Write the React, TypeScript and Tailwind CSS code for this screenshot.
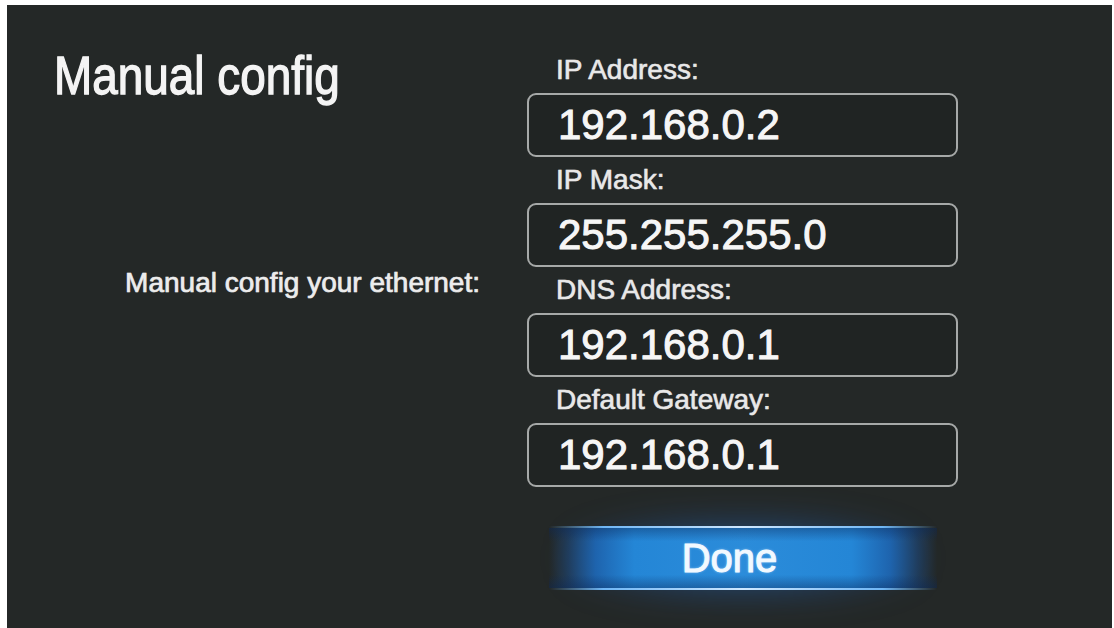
import React from "react";

const fields = [
  { label: "IP Address:", value: "192.168.0.2" },
  { label: "IP Mask:", value: "255.255.255.0" },
  { label: "DNS Address:", value: "192.168.0.1" },
  { label: "Default Gateway:", value: "192.168.0.1" },
];

export default function App() {
  return (
    <div
      className="w-[1114px] h-[628px] bg-white flex overflow-hidden"
      style={{ fontFamily: '"Liberation Sans", Arial, sans-serif' }}
    >
      <div className="mt-[5px] ml-[7px] mr-[2px] h-[623px] flex-1 bg-[#242827] flex text-white antialiased [text-shadow:0_0_1px_rgba(255,255,255,0.5)]">
        {/* Left column */}
        <div className="w-[520px] flex flex-col pt-[43px]">
          <div className="pl-[47px] h-[54px] leading-none">
            <span className="inline-block text-[54px] leading-none text-[#f4f4f4] scale-x-[0.85] origin-left whitespace-nowrap [-webkit-text-stroke:1.3px_#f4f4f4]">
              Manual config
            </span>
          </div>
          <div className="mt-[167px] pr-[47px] text-right text-[28px] leading-none text-[#ececec] whitespace-nowrap [-webkit-text-stroke:0.6px_#ececec]">
            Manual config your ethernet:
          </div>
        </div>

        {/* Right column */}
        <div className="w-[431px] flex flex-col pt-[42px]">
          {fields.map((f) => (
            <div key={f.label} className="flex flex-col">
              <div className="h-[46px] pt-[9px] pl-[29px] text-[28px] leading-none text-[#e8e8e8] whitespace-nowrap [-webkit-text-stroke:0.5px_#e8e8e8]">
                {f.label}
              </div>
              <div className="h-[64px] border-2 border-[#a6a9a8] rounded-[9px] flex items-center pl-[29px] bg-[#202423]">
                <span className="text-[42px] leading-none text-[#f6f6f6] whitespace-nowrap [-webkit-text-stroke:0.9px_#f6f6f6]">
                  {f.value}
                </span>
              </div>
            </div>
          ))}

          {/* Done button */}
          <div className="relative mt-[39px] mx-auto w-[388px] h-[64px]">
            <div className="absolute left-[20px] right-[20px] top-[-8px] bottom-[-8px] rounded-full blur-lg bg-[radial-gradient(ellipse_at_center,rgba(40,130,230,0.5)_0%,rgba(30,100,200,0.3)_55%,transparent_80%)]" />
            <div className="absolute inset-x-0 top-[2px] bottom-[2px] bg-[linear-gradient(90deg,transparent_0%,rgba(25,95,180,0.35)_5%,rgba(29,112,200,0.8)_12%,#2486d6_22%,#2b8cda_50%,#2486d6_78%,rgba(29,112,200,0.8)_88%,rgba(25,95,180,0.35)_95%,transparent_100%)]" />
            <div className="absolute inset-x-0 top-[2px] bottom-[2px] bg-[linear-gradient(180deg,rgba(10,40,90,0.4)_0%,rgba(10,40,90,0)_22%,rgba(10,40,90,0)_78%,rgba(10,40,90,0.4)_100%)]" />
            <div className="absolute inset-x-0 top-0 h-[2px] bg-[linear-gradient(90deg,transparent_0%,#6fb6f5_14%,#cfe8ff_50%,#6fb6f5_86%,transparent_100%)]" />
            <div className="absolute inset-x-0 bottom-0 h-[2px] bg-[linear-gradient(90deg,transparent_0%,#6fb6f5_14%,#cfe8ff_50%,#6fb6f5_86%,transparent_100%)]" />
            <div className="relative h-full flex items-center justify-center pr-[26px]">
              <span className="text-[40px] leading-none text-[#f2f9ff] [-webkit-text-stroke:1px_#f2f9ff] [text-shadow:0_0_3px_rgba(170,215,255,0.95)]">
                Done
              </span>
            </div>
          </div>
        </div>
      </div>
    </div>
  );
}
